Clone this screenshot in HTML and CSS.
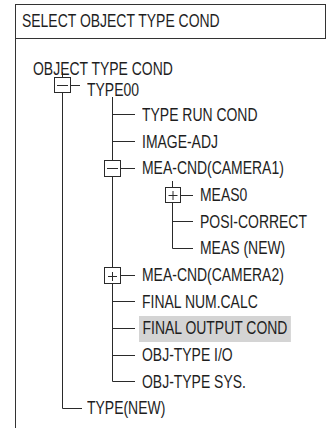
FILE: index.html
```html
<!DOCTYPE html>
<html>
<head>
<meta charset="utf-8">
<link rel="stylesheet" href="styles.css">
</head>
<body>
<div class="panel">
  <div class="header"><span class="t">SELECT OBJECT TYPE COND</span></div>
  <div class="tree">
    <svg class="links" width="310" height="389" viewBox="0 0 310 389">
      <g transform="translate(-16 -39)" stroke="#2a2a2a" stroke-width="1" fill="none">
        <path d="M62.5 72V408.5H82"/>
        <path d="M112.5 97V381.5H135"/>
        <path d="M112.5 114.5H135M112.5 141.5H135M120.5 168.5H135M120.5 275.5H135M112.5 301.5H135M112.5 328.5H135M112.5 355.5H135"/>
        <path d="M172.5 181V248.5H193M172.5 221.5H193M180.5 195.5H193"/>
        <path d="M70.5 85.5H80"/>
        <rect x="54.5" y="77.5" width="16" height="15" fill="#fff"/>
        <path d="M57 85.5H68"/>
        <rect x="104.5" y="160.5" width="16" height="16" fill="#fff"/>
        <path d="M107 168.5H118"/>
        <rect x="104.5" y="267.5" width="16" height="16" fill="#fff"/>
        <path d="M108 276.5H117M112.5 272V281"/>
        <rect x="165.5" y="187.5" width="15" height="15" fill="#fff"/>
        <path d="M168.5 195.5H177.5M173 191V200"/>
      </g>
    </svg>
    <div class="row root lv0"><span class="t">OBJECT TYPE COND</span></div>
    <div class="row first lv1"><span class="t">TYPE00</span></div>
    <div class="row lv2"><span class="t">TYPE RUN COND</span></div>
    <div class="row lv2"><span class="t">IMAGE-ADJ</span></div>
    <div class="row lv2"><span class="t">MEA-CND(CAMERA1)</span></div>
    <div class="row lv3"><span class="t">MEAS0</span></div>
    <div class="row lv3"><span class="t">POSI-CORRECT</span></div>
    <div class="row lv3"><span class="t">MEAS (NEW)</span></div>
    <div class="row lv2"><span class="t">MEA-CND(CAMERA2)</span></div>
    <div class="row lv2"><span class="t">FINAL NUM.CALC</span></div>
    <div class="row lv2 sel"><span class="t label">FINAL OUTPUT COND</span></div>
    <div class="row lv2"><span class="t">OBJ-TYPE I/O</span></div>
    <div class="row lv2"><span class="t">OBJ-TYPE SYS.</span></div>
    <div class="row lv1"><span class="t">TYPE(NEW)</span></div>
  </div>
</div>
</body>
</html>
```

FILE: styles.css
```css
html, body {
  margin: 0;
  padding: 0;
  background: #fff;
}
body {
  font-family: "Liberation Sans", Arial, sans-serif;
  color: #1e1e1e;
}
.panel {
  margin: 4px 0 0 15px;
  border-left: 1px solid #333;
  height: 424px;
}
.header {
  border-top: 1px solid #333;
  border-right: 1px solid #333;
  border-bottom: 1px solid #333;
  height: 33px;
  display: flex;
  align-items: center;
  padding-left: 6px;
  font-size: 18px;
  white-space: nowrap;
}
.t {
  display: inline-block;
  transform: scaleX(0.775);
  transform-origin: left center;
}
.tree {
  position: relative;
  padding-top: 20px;
}
.links {
  position: absolute;
  left: 0;
  top: 0;
}
.row {
  position: relative;
  height: 26.7px;
  display: flex;
  align-items: center;
  font-size: 18px;
  white-space: nowrap;
}
.row.root { height: 20px; }
.row.first { height: 23px; }
.lv0 { padding-left: 17px; }
.lv1 { padding-left: 71px; }
.lv2 { padding-left: 126px; }
.lv3 { padding-left: 184px; }
.row.sel { padding-left: 122.5px; }
.label {
  align-self: stretch;
  display: flex;
  align-items: center;
  padding: 0 4.5px;
  background: #d4d4d4;
}
```
